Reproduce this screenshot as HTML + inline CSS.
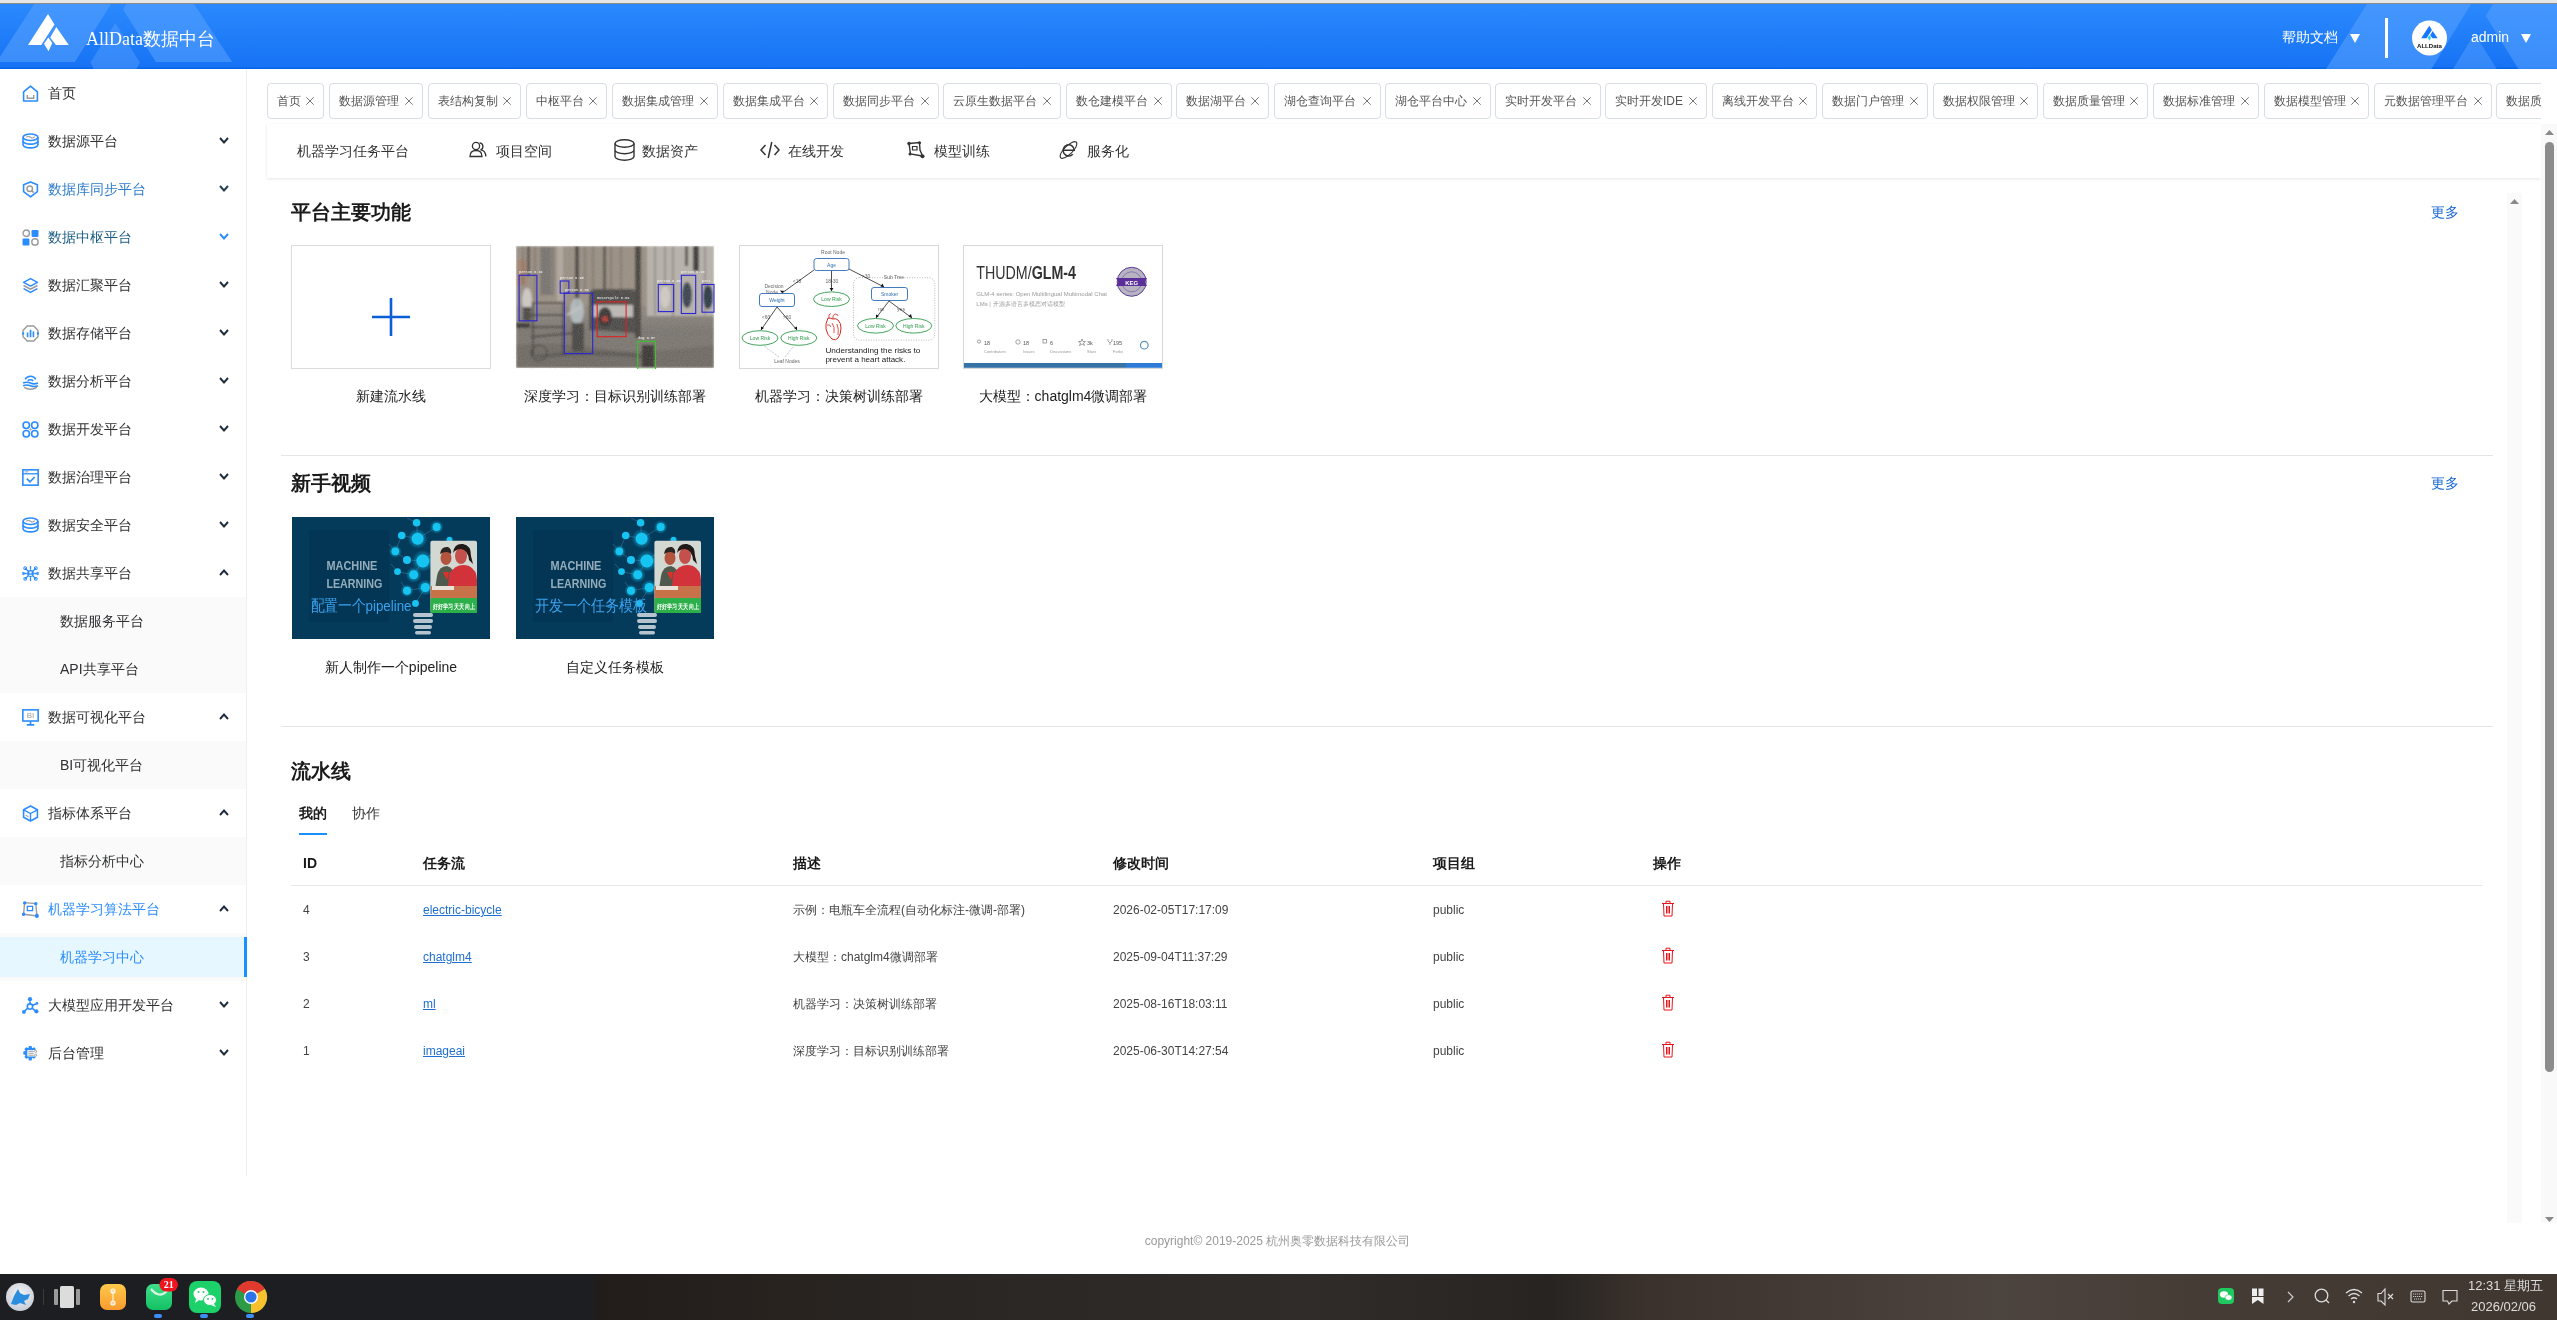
<!DOCTYPE html><html><head><meta charset="utf-8"><style>
*{margin:0;padding:0;box-sizing:border-box}
body{will-change:transform}
html,body{width:2557px;height:1320px;overflow:hidden;background:#fff;font-family:"Liberation Sans",sans-serif;color:#303133}
.a{position:absolute}
.nw{white-space:nowrap}
#topbar{position:absolute;left:0;top:0;width:2557px;height:4px;background:#e6e6e6;border-bottom:1px solid #8a8a8a}
#header{position:absolute;left:0;top:4px;width:2557px;height:65px;background:linear-gradient(180deg,#2b89fd 0%,#1773f4 96%,#0062ea 100%);overflow:hidden}
#sidebar{position:absolute;left:0;top:69px;width:247px;height:1107px;border-right:1px solid #efefef;background:#fff}
.mi{position:absolute;left:0;width:246px;height:48px;font-size:14px;line-height:48px;color:#303133;white-space:nowrap}
.mi .t{position:absolute;left:48px;top:0}
.mi svg.ic{position:absolute;left:21.5px;top:15.5px}
.mi svg.ch{position:absolute;left:219px;top:20px}
.sub{background:#fafafa}
.sub .t{left:60px}
.tag{position:absolute;top:83px;height:36px;border:1px solid #d9dde8;border-radius:4px;font-size:12px;line-height:35px;color:#555;white-space:nowrap;background:#fff}
.tag span{position:absolute;left:9px;top:0}
.tag svg{position:absolute;top:13px}
.sn{position:absolute;top:141px;font-size:14px;line-height:20px;color:#333;white-space:nowrap}
.card{position:absolute;width:200px;height:124px;overflow:hidden}
.lbl{position:absolute;font-size:14px;line-height:20px;color:#222;white-space:nowrap;text-align:center;width:260px}
.sec{position:absolute;margin-top:1px;font-size:20px;font-weight:bold;line-height:28px;color:#1a1a1a;white-space:nowrap}
.more{position:absolute;font-size:14px;line-height:20px;color:#1666d4;white-space:nowrap}
.hr{position:absolute;left:281px;width:2212px;height:1px;background:#e5e5e5}
.th{position:absolute;top:853px;font-size:14px;font-weight:bold;line-height:20px;color:#1a1a1a;white-space:nowrap}
.td{position:absolute;font-size:12px;line-height:18px;color:#444;white-space:nowrap}
.lk{color:#1f6fd0;text-decoration:underline}
</style></head><body>
<div id="topbar"></div><div id="header">
<svg class="a" style="left:0;top:0" width="2557" height="65">
<polygon points="34.2,0 111,0 74.8,58 0,58 0,52.7" fill="#5aa2ff" opacity="0.55"/>
<polygon points="115.3,19 139.8,58.6 136.4,65 93.8,65 90.4,58.6" fill="#5aa2ff" opacity="0.45"/>
<polygon points="126.1,0 194,0 232.2,58 155.9,58 123.2,5.8" fill="#5aa2ff" opacity="0.55"/>
<polygon points="2367,0 2471,0 2431.4,65 2326,65" fill="#5aa2ff" opacity="0.55"/>
<polygon points="2492.7,0 2557,0 2557,65 2518.3,65 2485.9,11.9" fill="#5aa2ff" opacity="0.55"/>
<polygon points="2453,65 2474.6,29.4 2496.7,65" fill="#5aa2ff" opacity="0.45"/>
<polygon points="48,10 54.5,20.5 41.3,41 28,41" fill="#fff"/>
<polygon points="56.3,23 68.8,41 55.9,41 50.2,33.5" fill="#fff"/>
<polygon points="48.4,33.6 52.3,38.9 48.5,47.2 44,39.7" fill="#fff"/>
</svg>
<div class="a nw" style="left:86px;top:22px;font-family:'Liberation Serif',serif;font-size:18px;color:#fff;line-height:26px">AllData数据中台</div>
<div class="a nw" style="left:2282px;top:23px;font-size:14px;color:#fff;line-height:20px">帮助文档</div>
<svg class="a" style="left:2350px;top:30px" width="10" height="9"><polygon points="0,0 10,0 5,9" fill="#fff"/></svg>
<div class="a" style="left:2385px;top:14px;width:3px;height:40px;background:#fff"></div>
<svg class="a" style="left:2411px;top:15.5px" width="36" height="36" viewBox="0 0 36 36">
<circle cx="18.5" cy="18" r="17.5" fill="#fff"/>
<g transform="translate(10.2,5.7) scale(0.404) translate(-28,-10)">
<polygon points="48,10 54.5,20.5 41.3,41 28,41" fill="#1677ff"/>
<polygon points="56.3,23 68.8,41 55.9,41 50.2,33.5" fill="#1677ff"/>
<polygon points="48.4,33.6 52.3,38.9 48.5,47.2 44,39.7" fill="#2ad0ea"/>
</g>
<text x="6" y="28.2" font-size="6.2" font-weight="bold" font-family="Liberation Sans" fill="#111" textLength="25" lengthAdjust="spacingAndGlyphs">ALLData</text>
</svg>
<div class="a nw" style="left:2471px;top:23px;font-size:14px;color:#fff;line-height:20px">admin</div>
<svg class="a" style="left:2521px;top:30px" width="10" height="9"><polygon points="0,0 10,0 5,9" fill="#fff"/></svg>
</div>
<div id="sidebar">
<div class="mi" style="top:0px;color:#303133"><svg class="ic" width="17" height="17" viewBox="0 0 16 16"><path d="M1.5 6.5 L8 1 L14.5 6.5 V15 H1.5 Z" fill="none" stroke="#2b8cff" stroke-width="1.5" stroke-linejoin="round"/><path d="M5 9.5 V12.5 H11 V9.5" fill="none" stroke="#9a9a9a" stroke-width="1.3"/></svg><span class="t">首页</span>
</div>
<div class="mi" style="top:48px;color:#303133"><svg class="ic" width="17" height="17" viewBox="0 0 16 16"><ellipse cx="8" cy="4" rx="7" ry="3" fill="none" stroke="#2b8cff" stroke-width="1.5"/><path d="M1 4 V11 A7 3 0 0 0 15 11 V4" fill="none" stroke="#2b8cff" stroke-width="1.5"/><path d="M1 7.5 A7 3 0 0 0 15 7.5" fill="none" stroke="#2b8cff" stroke-width="1.5"/><path d="M4 4 Q6 2.5 8 4 T12 3.5" fill="none" stroke="#9a9a9a" stroke-width="1"/></svg><span class="t">数据源平台</span>
<svg class="ch" width="10" height="7" viewBox="0 0 10 7"><path d="M1 1 L5 5.5 L9 1" fill="none" stroke="#1f2d3d" stroke-width="1.9"/></svg>
</div>
<div class="mi" style="top:96px;color:#2d7ccc"><svg class="ic" width="17" height="17" viewBox="0 0 16 16"><path d="M8 1 L14.5 3.5 V10 L8 15 L1.5 10 V3.5 Z" fill="none" stroke="#2b8cff" stroke-width="1.5" stroke-linejoin="round"/><circle cx="7.3" cy="7.3" r="2.6" fill="none" stroke="#9a9a9a" stroke-width="1.4"/><path d="M9.2 9.2 L11 11" stroke="#9a9a9a" stroke-width="1.5"/></svg><span class="t">数据库同步平台</span>
<svg class="ch" width="10" height="7" viewBox="0 0 10 7"><path d="M1 1 L5 5.5 L9 1" fill="none" stroke="#1f3d55" stroke-width="1.9"/></svg>
</div>
<div class="mi" style="top:144px;color:#1d5d85"><svg class="ic" width="17" height="17" viewBox="0 0 16 16"><circle cx="4" cy="4" r="3" fill="none" stroke="#9a9a9a" stroke-width="1.3"/><rect x="9" y="1" width="6.5" height="6.5" rx="1.2" fill="#2b8cff"/><rect x="0.5" y="9" width="6.5" height="6.5" rx="1.2" fill="#2b8cff"/><circle cx="12.2" cy="12.2" r="3" fill="none" stroke="#9a9a9a" stroke-width="1.3"/></svg><span class="t">数据中枢平台</span>
<svg class="ch" width="10" height="7" viewBox="0 0 10 7"><path d="M1 1 L5 5.5 L9 1" fill="none" stroke="#2b8cff" stroke-width="1.9"/></svg>
</div>
<div class="mi" style="top:192px;color:#303133"><svg class="ic" width="17" height="17" viewBox="0 0 16 16"><path d="M8 1.5 L14.5 5 L8 8.5 L1.5 5 Z" fill="none" stroke="#2b8cff" stroke-width="1.4" stroke-linejoin="round"/><path d="M1.5 8 L8 11.5 L14.5 8" fill="none" stroke="#9a9a9a" stroke-width="1.4"/><path d="M1.5 11 L8 14.5 L14.5 11" fill="none" stroke="#2b8cff" stroke-width="1.4"/></svg><span class="t">数据汇聚平台</span>
<svg class="ch" width="10" height="7" viewBox="0 0 10 7"><path d="M1 1 L5 5.5 L9 1" fill="none" stroke="#1f2d3d" stroke-width="1.9"/></svg>
</div>
<div class="mi" style="top:240px;color:#303133"><svg class="ic" width="17" height="17" viewBox="0 0 16 16"><path d="M5 1 H11 L15 5 V11 L11 15 H5 L1 11 V5 Z" fill="none" stroke="#9a9a9a" stroke-width="1.3"/><rect x="4.5" y="7" width="1.5" height="4.5" fill="#2b8cff"/><rect x="7.2" y="4.5" width="1.6" height="7" fill="#2b8cff"/><rect x="10" y="6" width="1.5" height="5.5" fill="#2b8cff"/><rect x="0" y="7" width="2" height="2" fill="#2b8cff"/><rect x="14" y="7" width="2" height="2" fill="#2b8cff"/></svg><span class="t">数据存储平台</span>
<svg class="ch" width="10" height="7" viewBox="0 0 10 7"><path d="M1 1 L5 5.5 L9 1" fill="none" stroke="#1f2d3d" stroke-width="1.9"/></svg>
</div>
<div class="mi" style="top:288px;color:#303133"><svg class="ic" width="17" height="17" viewBox="0 0 16 16"><path d="M3 6 A5.5 5 0 0 1 13 6" fill="none" stroke="#2b8cff" stroke-width="1.4"/><path d="M5.5 7.5 A3 2.5 0 0 1 10.5 7.5" fill="none" stroke="#2b8cff" stroke-width="1.4"/><path d="M1 9.5 Q4.5 8 8 9.5 T15 9.5" fill="none" stroke="#2b8cff" stroke-width="1.5"/><path d="M1 12 Q4.5 10.5 8 12 T15 12" fill="none" stroke="#2b8cff" stroke-width="1.5"/><path d="M2 13.5 Q8 17 14 13.5" fill="none" stroke="#9a9a9a" stroke-width="1.4"/></svg><span class="t">数据分析平台</span>
<svg class="ch" width="10" height="7" viewBox="0 0 10 7"><path d="M1 1 L5 5.5 L9 1" fill="none" stroke="#1f2d3d" stroke-width="1.9"/></svg>
</div>
<div class="mi" style="top:336px;color:#303133"><svg class="ic" width="17" height="17" viewBox="0 0 16 16"><circle cx="4" cy="4" r="3" fill="none" stroke="#2b8cff" stroke-width="1.5"/><circle cx="12" cy="4" r="3" fill="none" stroke="#2b8cff" stroke-width="1.5"/><circle cx="4" cy="12" r="3" fill="none" stroke="#2b8cff" stroke-width="1.5"/><circle cx="12" cy="12" r="3" fill="none" stroke="#2b8cff" stroke-width="1.5"/><path d="M7 8 H9 M8 7 V9" stroke="#9a9a9a" stroke-width="1"/></svg><span class="t">数据开发平台</span>
<svg class="ch" width="10" height="7" viewBox="0 0 10 7"><path d="M1 1 L5 5.5 L9 1" fill="none" stroke="#1f2d3d" stroke-width="1.9"/></svg>
</div>
<div class="mi" style="top:384px;color:#303133"><svg class="ic" width="17" height="17" viewBox="0 0 16 16"><rect x="0.8" y="0.8" width="14.4" height="14.4" fill="none" stroke="#2b8cff" stroke-width="1.5"/><path d="M0.8 4.5 H15.2" stroke="#2b8cff" stroke-width="1.2"/><path d="M2.5 2.7 H6" stroke="#9a9a9a" stroke-width="0.9"/><path d="M4.5 9 L7.5 12 L12 7.5" fill="none" stroke="#2b8cff" stroke-width="1.5"/></svg><span class="t">数据治理平台</span>
<svg class="ch" width="10" height="7" viewBox="0 0 10 7"><path d="M1 1 L5 5.5 L9 1" fill="none" stroke="#1f2d3d" stroke-width="1.9"/></svg>
</div>
<div class="mi" style="top:432px;color:#303133"><svg class="ic" width="17" height="17" viewBox="0 0 16 16"><ellipse cx="8" cy="4" rx="7" ry="3" fill="none" stroke="#2b8cff" stroke-width="1.5"/><path d="M1 4 V11 A7 3 0 0 0 15 11 V4" fill="none" stroke="#2b8cff" stroke-width="1.5"/><path d="M1 7.5 A7 3 0 0 0 15 7.5" fill="none" stroke="#2b8cff" stroke-width="1.5"/><path d="M4 4 Q6 2.5 8 4 T12 3.5" fill="none" stroke="#9a9a9a" stroke-width="1"/></svg><span class="t">数据安全平台</span>
<svg class="ch" width="10" height="7" viewBox="0 0 10 7"><path d="M1 1 L5 5.5 L9 1" fill="none" stroke="#1f2d3d" stroke-width="1.9"/></svg>
</div>
<div class="mi" style="top:480px;color:#303133"><svg class="ic" width="17" height="17" viewBox="0 0 16 16"><circle cx="8" cy="8" r="3.2" fill="#2b8cff"/><circle cx="8" cy="7" r="1.1" fill="#fff"/><path d="M6 10 Q8 8 10 10" fill="#fff"/><path d="M3 3 L6 6 M13 3 L10 6 M3 13 L6 10 M13 13 L10 10 M8 1 V4.5 M8 15 V11.5 M1 8 H4.5 M15 8 H11.5" stroke="#2b8cff" stroke-width="1.2"/><circle cx="3" cy="3" r="1.3" fill="none" stroke="#2b8cff" stroke-width="1"/><circle cx="13" cy="3" r="1.3" fill="none" stroke="#2b8cff" stroke-width="1"/><circle cx="3" cy="13" r="1.3" fill="none" stroke="#2b8cff" stroke-width="1"/><circle cx="13" cy="13" r="1.3" fill="none" stroke="#2b8cff" stroke-width="1"/><circle cx="1.2" cy="8" r="1.1" fill="none" stroke="#2b8cff" stroke-width="0.9"/><circle cx="14.8" cy="8" r="1.1" fill="none" stroke="#2b8cff" stroke-width="0.9"/></svg><span class="t">数据共享平台</span>
<svg class="ch" width="10" height="7" viewBox="0 0 10 7"><path d="M1 6 L5 1.5 L9 6" fill="none" stroke="#1f2d3d" stroke-width="1.9"/></svg>
</div>
<div class="mi sub" style="top:528px;color:#303133">
<span class="t">数据服务平台</span></div>
<div class="mi sub" style="top:576px;color:#303133">
<span class="t">API共享平台</span></div>
<div class="mi" style="top:624px;color:#303133"><svg class="ic" width="17" height="17" viewBox="0 0 16 16"><rect x="0.8" y="0.8" width="14.4" height="10.5" fill="none" stroke="#2b8cff" stroke-width="1.5"/><text x="8" y="8.8" font-size="7.5" text-anchor="middle" font-family="Liberation Sans" fill="#9a9a9a">BI</text><path d="M8 11.5 V14.5 M4.5 15 H11.5" stroke="#2b8cff" stroke-width="1.6"/></svg><span class="t">数据可视化平台</span>
<svg class="ch" width="10" height="7" viewBox="0 0 10 7"><path d="M1 6 L5 1.5 L9 6" fill="none" stroke="#1f2d3d" stroke-width="1.9"/></svg>
</div>
<div class="mi sub" style="top:672px;color:#303133">
<span class="t">BI可视化平台</span></div>
<div class="mi" style="top:720px;color:#303133"><svg class="ic" width="17" height="17" viewBox="0 0 16 16"><path d="M8 1 L14.5 4.5 V11.5 L8 15 L1.5 11.5 V4.5 Z" fill="none" stroke="#2b8cff" stroke-width="1.5" stroke-linejoin="round"/><path d="M1.5 4.5 L8 8 L14.5 4.5 M8 8 V15" fill="none" stroke="#2b8cff" stroke-width="1.3"/><path d="M3.5 9.5 L6 11" stroke="#9a9a9a" stroke-width="1"/></svg><span class="t">指标体系平台</span>
<svg class="ch" width="10" height="7" viewBox="0 0 10 7"><path d="M1 6 L5 1.5 L9 6" fill="none" stroke="#1f2d3d" stroke-width="1.9"/></svg>
</div>
<div class="mi sub" style="top:768px;color:#303133">
<span class="t">指标分析中心</span></div>
<div class="mi" style="top:816px;color:#2b8cff"><svg class="ic" width="17" height="17" viewBox="0 0 16 16"><path d="M2.5 1.5 L13 2.5 L14 14 L1.5 12.5 Z" fill="none" stroke="#9a9a9a" stroke-width="1.3"/><path d="M5 5 H10 V9 H5 Z" fill="none" stroke="#2b8cff" stroke-width="1.2"/><circle cx="2.5" cy="1.8" r="1.6" fill="#2b8cff"/><circle cx="13" cy="2.5" r="1.6" fill="#2b8cff"/><circle cx="14" cy="14" r="1.9" fill="#2b8cff"/><circle cx="1.5" cy="12.5" r="1.6" fill="#2b8cff"/></svg><span class="t">机器学习算法平台</span>
<svg class="ch" width="10" height="7" viewBox="0 0 10 7"><path d="M1 6 L5 1.5 L9 6" fill="none" stroke="#1f2d3d" stroke-width="1.9"/></svg>
</div>
<div class="mi sub" style="top:864px;color:#2b8cff">
<div class="a" style="left:0;top:4px;width:244px;height:40px;background:#e6f7ff"></div><div class="a" style="left:244px;top:4px;width:3px;height:40px;background:#1890ff"></div>
<span class="t">机器学习中心</span></div>
<div class="mi" style="top:912px;color:#303133"><svg class="ic" width="17" height="17" viewBox="0 0 16 16"><circle cx="7.5" cy="2" r="2" fill="#2b8cff"/><circle cx="1.8" cy="14" r="1.8" fill="#2b8cff"/><circle cx="13.5" cy="13.5" r="2" fill="#2b8cff"/><circle cx="14" cy="6" r="1.3" fill="#2b8cff"/><circle cx="7.5" cy="9" r="2.5" fill="none" stroke="#2b8cff" stroke-width="1.5"/><path d="M7.5 4 V6.5 M5.5 10.5 L2.5 13 M9.5 10.5 L12 12.5 M9.5 8 L13 6.5" stroke="#2b8cff" stroke-width="1.5"/></svg><span class="t">大模型应用开发平台</span>
<svg class="ch" width="10" height="7" viewBox="0 0 10 7"><path d="M1 1 L5 5.5 L9 1" fill="none" stroke="#1f2d3d" stroke-width="1.9"/></svg>
</div>
<div class="mi" style="top:960px;color:#303133"><svg class="ic" width="17" height="17" viewBox="0 0 16 16"><path d="M6.5 1 H9 L9.5 3 L11.5 2 L13 3.7 L12 5.6 L14 6.2 V8.8 L12 9.4 L13 11.3 L11.5 13 L9.5 12 L9 14.5 H6.5 L6 12 L4 13 L2.3 11.3 L3.3 9.4 L1.2 8.8 V6.2 L3.3 5.6 L2.3 3.7 L4 2 L6 3 Z" fill="#2b8cff"/><rect x="5" y="4.8" width="9" height="6" fill="#fff"/><path d="M6 6 H11 M6 7.8 H11 M6 9.6 H11" stroke="#9a9a9a" stroke-width="0.9"/><circle cx="12.8" cy="6" r="1" fill="none" stroke="#9a9a9a" stroke-width="0.8"/><circle cx="12.8" cy="9.6" r="1" fill="none" stroke="#9a9a9a" stroke-width="0.8"/></svg><span class="t">后台管理</span>
<svg class="ch" width="10" height="7" viewBox="0 0 10 7"><path d="M1 1 L5 5.5 L9 1" fill="none" stroke="#1f2d3d" stroke-width="1.9"/></svg>
</div>
</div>
<div class="a" style="left:0;top:0;width:2541px;height:130px;overflow:hidden">
<div class="tag" style="left:267px;width:57px"><span>首页</span><svg style="left:38px;top:13px" width="8" height="8" viewBox="0 0 8 8"><path d="M0.3 0.3 L7.7 7.7 M7.7 0.3 L0.3 7.7" stroke="#666" stroke-width="0.9"/></svg></div>
<div class="tag" style="left:329px;width:94px"><span>数据源管理</span><svg style="left:75px;top:13px" width="8" height="8" viewBox="0 0 8 8"><path d="M0.3 0.3 L7.7 7.7 M7.7 0.3 L0.3 7.7" stroke="#666" stroke-width="0.9"/></svg></div>
<div class="tag" style="left:428px;width:93px"><span>表结构复制</span><svg style="left:74px;top:13px" width="8" height="8" viewBox="0 0 8 8"><path d="M0.3 0.3 L7.7 7.7 M7.7 0.3 L0.3 7.7" stroke="#666" stroke-width="0.9"/></svg></div>
<div class="tag" style="left:526px;width:81px"><span>中枢平台</span><svg style="left:62px;top:13px" width="8" height="8" viewBox="0 0 8 8"><path d="M0.3 0.3 L7.7 7.7 M7.7 0.3 L0.3 7.7" stroke="#666" stroke-width="0.9"/></svg></div>
<div class="tag" style="left:612px;width:106px"><span>数据集成管理</span><svg style="left:87px;top:13px" width="8" height="8" viewBox="0 0 8 8"><path d="M0.3 0.3 L7.7 7.7 M7.7 0.3 L0.3 7.7" stroke="#666" stroke-width="0.9"/></svg></div>
<div class="tag" style="left:723px;width:105px"><span>数据集成平台</span><svg style="left:86px;top:13px" width="8" height="8" viewBox="0 0 8 8"><path d="M0.3 0.3 L7.7 7.7 M7.7 0.3 L0.3 7.7" stroke="#666" stroke-width="0.9"/></svg></div>
<div class="tag" style="left:833px;width:106px"><span>数据同步平台</span><svg style="left:87px;top:13px" width="8" height="8" viewBox="0 0 8 8"><path d="M0.3 0.3 L7.7 7.7 M7.7 0.3 L0.3 7.7" stroke="#666" stroke-width="0.9"/></svg></div>
<div class="tag" style="left:943px;width:118px"><span>云原生数据平台</span><svg style="left:99px;top:13px" width="8" height="8" viewBox="0 0 8 8"><path d="M0.3 0.3 L7.7 7.7 M7.7 0.3 L0.3 7.7" stroke="#666" stroke-width="0.9"/></svg></div>
<div class="tag" style="left:1066px;width:106px"><span>数仓建模平台</span><svg style="left:87px;top:13px" width="8" height="8" viewBox="0 0 8 8"><path d="M0.3 0.3 L7.7 7.7 M7.7 0.3 L0.3 7.7" stroke="#666" stroke-width="0.9"/></svg></div>
<div class="tag" style="left:1176px;width:93px"><span>数据湖平台</span><svg style="left:74px;top:13px" width="8" height="8" viewBox="0 0 8 8"><path d="M0.3 0.3 L7.7 7.7 M7.7 0.3 L0.3 7.7" stroke="#666" stroke-width="0.9"/></svg></div>
<div class="tag" style="left:1274px;width:107px"><span>湖仓查询平台</span><svg style="left:88px;top:13px" width="8" height="8" viewBox="0 0 8 8"><path d="M0.3 0.3 L7.7 7.7 M7.7 0.3 L0.3 7.7" stroke="#666" stroke-width="0.9"/></svg></div>
<div class="tag" style="left:1385px;width:106px"><span>湖仓平台中心</span><svg style="left:87px;top:13px" width="8" height="8" viewBox="0 0 8 8"><path d="M0.3 0.3 L7.7 7.7 M7.7 0.3 L0.3 7.7" stroke="#666" stroke-width="0.9"/></svg></div>
<div class="tag" style="left:1495px;width:106px"><span>实时开发平台</span><svg style="left:87px;top:13px" width="8" height="8" viewBox="0 0 8 8"><path d="M0.3 0.3 L7.7 7.7 M7.7 0.3 L0.3 7.7" stroke="#666" stroke-width="0.9"/></svg></div>
<div class="tag" style="left:1605px;width:102px"><span>实时开发IDE</span><svg style="left:83px;top:13px" width="8" height="8" viewBox="0 0 8 8"><path d="M0.3 0.3 L7.7 7.7 M7.7 0.3 L0.3 7.7" stroke="#666" stroke-width="0.9"/></svg></div>
<div class="tag" style="left:1712px;width:105px"><span>离线开发平台</span><svg style="left:86px;top:13px" width="8" height="8" viewBox="0 0 8 8"><path d="M0.3 0.3 L7.7 7.7 M7.7 0.3 L0.3 7.7" stroke="#666" stroke-width="0.9"/></svg></div>
<div class="tag" style="left:1822px;width:106px"><span>数据门户管理</span><svg style="left:87px;top:13px" width="8" height="8" viewBox="0 0 8 8"><path d="M0.3 0.3 L7.7 7.7 M7.7 0.3 L0.3 7.7" stroke="#666" stroke-width="0.9"/></svg></div>
<div class="tag" style="left:1933px;width:105px"><span>数据权限管理</span><svg style="left:86px;top:13px" width="8" height="8" viewBox="0 0 8 8"><path d="M0.3 0.3 L7.7 7.7 M7.7 0.3 L0.3 7.7" stroke="#666" stroke-width="0.9"/></svg></div>
<div class="tag" style="left:2043px;width:105px"><span>数据质量管理</span><svg style="left:86px;top:13px" width="8" height="8" viewBox="0 0 8 8"><path d="M0.3 0.3 L7.7 7.7 M7.7 0.3 L0.3 7.7" stroke="#666" stroke-width="0.9"/></svg></div>
<div class="tag" style="left:2153px;width:106px"><span>数据标准管理</span><svg style="left:87px;top:13px" width="8" height="8" viewBox="0 0 8 8"><path d="M0.3 0.3 L7.7 7.7 M7.7 0.3 L0.3 7.7" stroke="#666" stroke-width="0.9"/></svg></div>
<div class="tag" style="left:2264px;width:105px"><span>数据模型管理</span><svg style="left:86px;top:13px" width="8" height="8" viewBox="0 0 8 8"><path d="M0.3 0.3 L7.7 7.7 M7.7 0.3 L0.3 7.7" stroke="#666" stroke-width="0.9"/></svg></div>
<div class="tag" style="left:2374px;width:118px"><span>元数据管理平台</span><svg style="left:99px;top:13px" width="8" height="8" viewBox="0 0 8 8"><path d="M0.3 0.3 L7.7 7.7 M7.7 0.3 L0.3 7.7" stroke="#666" stroke-width="0.9"/></svg></div>
<div class="tag" style="left:2496px;width:105px"><span>数据质量管理</span><svg style="left:86px;top:13px" width="8" height="8" viewBox="0 0 8 8"><path d="M0.3 0.3 L7.7 7.7 M7.7 0.3 L0.3 7.7" stroke="#666" stroke-width="0.9"/></svg></div>
</div>
<div class="a" style="left:267px;top:124px;width:2274px;height:54px;background:#fff;box-shadow:0 1px 3px rgba(0,0,0,0.10)"></div>
<div class="sn" style="left:297px">机器学习任务平台</div>
<svg class="a" style="left:469px;top:141px" width="18" height="17" viewBox="0 0 18 17"><circle cx="7" cy="5" r="3.6" fill="none" stroke="#333" stroke-width="1.3"/><path d="M1 15.5 Q1 9.5 7 9.5 Q13 9.5 13 15.5 Z" fill="none" stroke="#333" stroke-width="1.3"/><path d="M10.5 1.8 A3.6 3.6 0 0 1 11.5 8.8 Q16.8 9.5 16.8 15.5" fill="none" stroke="#333" stroke-width="1.3"/></svg>
<div class="sn" style="left:496px">项目空间</div>
<svg class="a" style="left:614px;top:139px" width="21" height="22" viewBox="0 0 21 22"><ellipse cx="10.5" cy="4.5" rx="9.5" ry="3.7" fill="none" stroke="#333" stroke-width="1.4"/><path d="M1 4.5 V17.5 A9.5 3.7 0 0 0 20 17.5 V4.5 M1 11 A9.5 3.7 0 0 0 20 11" fill="none" stroke="#333" stroke-width="1.4"/></svg>
<div class="sn" style="left:642px">数据资产</div>
<svg class="a" style="left:760px;top:141px" width="20" height="18" viewBox="0 0 20 18"><path d="M5.5 4 L1 9 L5.5 14 M14.5 4 L19 9 L14.5 14 M11.8 1 L8.2 17" fill="none" stroke="#333" stroke-width="1.5"/></svg>
<div class="sn" style="left:788px">在线开发</div>
<svg class="a" style="left:907px;top:141px" width="18" height="18" viewBox="0 0 18 18"><path d="M2 2.5 L12.5 1.5 L13 9 L15.5 15 L3.5 13 Z" fill="none" stroke="#333" stroke-width="1.4"/><path d="M5.5 5.5 H10 V9 H5.5 Z" fill="none" stroke="#333" stroke-width="1.2"/><circle cx="2" cy="2.5" r="1.7" fill="#333"/><circle cx="12.5" cy="1.8" r="1.5" fill="#333"/><circle cx="15.5" cy="15.3" r="2" fill="#333"/><circle cx="3" cy="13" r="1.5" fill="#333"/></svg>
<div class="sn" style="left:934px">模型训练</div>
<svg class="a" style="left:1058px;top:139px" width="22" height="22" viewBox="0 0 22 22"><path d="M5.2 11.2 H16.3 A5.6 5.6 0 1 0 14.8 15.2" fill="none" stroke="#333" stroke-width="1.5"/><ellipse cx="10.5" cy="11" rx="11" ry="4.2" transform="rotate(-45 10.5 11)" fill="none" stroke="#333" stroke-width="1.1"/></svg>
<div class="sn" style="left:1087px">服务化</div>
<div class="sec" style="left:291px;top:197px">平台主要功能</div>
<div class="more" style="left:2431px;top:202px">更多</div>
<div class="card" style="left:291px;top:245px;border:1px solid #dcdcdc;background:#fff"><svg class="a" style="left:80px;top:52px" width="38" height="38"><path d="M19 0 V38 M0 19 H38" stroke="#0b5fd6" stroke-width="2.6"/></svg></div>
<svg class="card" style="left:515px;top:245px" width="200" height="124" viewBox="0 0 200 124">
<defs>
<linearGradient id="st1" x1="0" y1="0" x2="0" y2="1"><stop offset="0" stop-color="#9e948a"/><stop offset="0.55" stop-color="#8c857e"/><stop offset="0.7" stop-color="#7a7570"/><stop offset="1" stop-color="#6a6560"/></linearGradient>
<linearGradient id="st2" x1="0" y1="0" x2="1" y2="0"><stop offset="0" stop-color="#000" stop-opacity="0"/><stop offset="1" stop-color="#fff" stop-opacity="0.25"/></linearGradient>
</defs>
<rect x="0" y="0" width="200" height="124" fill="#fff"/>
<filter id="stb" x="0" y="0" width="100%" height="100%"><feGaussianBlur stdDeviation="0.8"/></filter><g filter="url(#stb)"><rect x="1" y="1" width="198" height="122" fill="url(#st1)"/>
<rect x="132" y="1" width="67" height="70" fill="#b7b2ab"/>
<rect x="1" y="1" width="131" height="60" fill="#9a8f84"/>
<rect x="25" y="2" width="14" height="48" fill="#7c7570"/><rect x="27" y="4" width="10" height="44" fill="#8f8a86"/>
<rect x="12" y="1" width="3" height="30" fill="#5a5550"/><rect x="60" y="1" width="4" height="60" fill="#4d4843"/>
<rect x="42" y="1" width="6" height="55" fill="#b0a89f"/><rect x="88" y="1" width="3" height="50" fill="#5c5650"/>
<rect x="120" y="1" width="6" height="92" fill="#4a4540"/><rect x="170" y="1" width="3" height="20" fill="#555"/><rect x="178" y="1" width="6" height="25" fill="#3f3c3a"/>
<rect x="2" y="15" width="10" height="25" fill="#a87d68" opacity="0.7"/>
<rect x="74" y="44" width="48" height="45" rx="6" fill="#4e4b49"/><rect x="78" y="60" width="40" height="12" fill="#bdbab6"/>
<rect x="1" y="78" width="14" height="5" fill="#3a3836"/>
<path d="M1 88 Q60 82 120 88 T199 84 V123 H1 Z" fill="#7b7671"/>
<path d="M1 100 Q50 96 90 104 Q130 110 199 100 V123 H1 Z" fill="#6f6a65"/>
<path d="M20 112 Q80 104 140 113" stroke="#4a4744" stroke-width="4" fill="none" opacity="0.5"/>
<g stroke="#3e3a36" stroke-width="1.4" fill="none"><path d="M16 58 H50 M16 70 H48 M16 82 H50 M18 58 V112 M48 58 V110 M16 92 L60 88"/><circle cx="24" cy="108" r="8" stroke-width="1"/></g>
<rect x="25" y="2" width="12" height="46" fill="#8a8580"/><g stroke="#4e4a46" stroke-width="0.8"><path d="M27 2 V48 M29.5 2 V48 M32 2 V48 M34.5 2 V48"/></g>
<g stroke="#5a544e" stroke-width="1" opacity="0.7"><path d="M8 1 V40 M20 1 V56 M70 1 V50 M78 1 V45 M96 1 V44 M106 1 V48 M140 1 V70 M150 1 V60 M158 1 V72 M190 1 V70"/></g>
<ellipse cx="12" cy="55" rx="5" ry="12" fill="#d6d3cf" opacity="0.85"/><rect x="8" y="62" width="8" height="14" fill="#4c4946"/>
<ellipse cx="62" cy="66" rx="7" ry="13" fill="#b9c4c8" opacity="0.85"/><rect x="57" y="78" width="12" height="28" fill="#4a4744"/><path d="M52 70 L66 62" stroke="#c9c6c2" stroke-width="2"/>
<ellipse cx="90" cy="72" rx="7" ry="10" fill="#3a3634"/><circle cx="90" cy="74" r="3" fill="#b83a32"/>
<rect x="127" y="100" width="12" height="22" fill="#3b3836"/>
<ellipse cx="150" cy="52" rx="5" ry="11" fill="#d0cbc4"/><ellipse cx="172" cy="50" rx="5" ry="13" fill="#3b4550"/><ellipse cx="193" cy="52" rx="5" ry="12" fill="#2c3a48"/>
<rect x="120" y="1" width="6" height="92" fill="#4a4540"/>
</g>
<filter id="stn"><feTurbulence type="fractalNoise" baseFrequency="0.9" numOctaves="2" seed="3"/><feColorMatrix type="matrix" values="0 0 0 0 0.5  0 0 0 0 0.48  0 0 0 0 0.45  0 0 0 1.2 -0.35"/></filter>
<rect x="1" y="1" width="198" height="122" filter="url(#stn)" opacity="0.3"/>
<g fill="none" stroke-width="1.1">
<rect x="4.1" y="30.3" width="17.8" height="45.5" stroke="#2a24d8"/>
<rect x="45.2" y="36" width="8.7" height="12.2" stroke="#2a24d8"/>
<rect x="49.3" y="48.2" width="28.4" height="60.4" stroke="#2a24d8"/>
<rect x="82.2" y="56.9" width="28.9" height="34.8" stroke="#e02020"/>
<rect x="122.7" y="96.3" width="17.8" height="28" stroke="#3ac42a"/>
<rect x="143.3" y="39.5" width="15.4" height="27.1" stroke="#2a24d8"/>
<rect x="166.3" y="30.3" width="14.4" height="38.2" stroke="#2a24d8"/>
<rect x="187" y="39.5" width="12" height="27.7" stroke="#2a24d8"/>
</g>
<g fill="#f4f4f4" opacity="0.8" font-family="Liberation Mono" font-size="3.6" font-weight="bold"><text x="4" y="28">person 0.92</text><text x="45" y="33.5">person 0.95</text><text x="50" y="45.5">person 0.89</text><text x="82" y="54">motorcycle 0.82</text><text x="123" y="93.5">dog 0.87</text><text x="142" y="36.5">person 0.80</text><text x="166" y="27.5">person 0.90</text><text x="187" y="36.5">pers</text></g>
</svg>
<svg class="card" style="left:739px;top:245px" width="200" height="124" viewBox="0 0 200 124">
<rect x="0.5" y="0.5" width="199" height="123" fill="#fff" stroke="#d8d8d8"/>
<g font-family="Liberation Sans" font-size="5" fill="#666" text-anchor="middle">
<text x="94" y="8.5">Root Node</text><text x="155" y="34">Sub Tree</text><text x="35" y="43">Decision</text><text x="33" y="49">Node</text><text x="48" y="118">Leaf Nodes</text>
<text x="58" y="38">&lt;18</text><text x="93" y="38">18-30</text><text x="127" y="33">&gt;30</text><text x="27" y="74">&lt;60</text><text x="48" y="74">&gt;60</text><text x="142" y="66">no</text><text x="162" y="66">yes</text>
</g>
<g fill="none" stroke="#2f6db5" stroke-width="0.9"><rect x="75" y="13.5" width="35" height="12" rx="2.5"/><rect x="20.5" y="48.5" width="35" height="13" rx="2.5"/><rect x="132.5" y="42.5" width="36" height="13" rx="2.5"/></g>
<g font-family="Liberation Sans" font-size="5" fill="#2f6db5" text-anchor="middle"><text x="92.5" y="21.5">Age</text><text x="38" y="57">Weight</text><text x="150.5" y="51">Smoker</text></g>
<g fill="none" stroke="#2e9a4a" stroke-width="0.9"><ellipse cx="92.5" cy="54.2" rx="18" ry="7.3"/><ellipse cx="21" cy="93" rx="18" ry="7.3"/><ellipse cx="59.8" cy="93" rx="18" ry="7.3"/><ellipse cx="136.5" cy="80.8" rx="18" ry="7.3"/><ellipse cx="174.8" cy="80.8" rx="18" ry="7.3"/></g>
<g font-family="Liberation Sans" font-size="5" fill="#2e9a4a" text-anchor="middle"><text x="92.5" y="56">Low Risk</text><text x="21" y="95">Low Risk</text><text x="59.8" y="95">High Risk</text><text x="136.5" y="83">Low Risk</text><text x="174.8" y="83">High Risk</text></g>
<rect x="114.5" y="32.7" width="81.3" height="62.4" rx="6" fill="none" stroke="#888" stroke-width="0.6" stroke-dasharray="1,1.5"/>
<g fill="none" stroke="#222" stroke-width="0.8"><path d="M75 25 L43 48"/><path d="M92.5 26 V46"/><path d="M110 24 L145 42"/><path d="M38 62 L22 85"/><path d="M38 62 L58 85"/><path d="M150 56 L137 73"/><path d="M150 56 L173 73"/></g>
<g fill="none" stroke="#888" stroke-width="0.6" stroke-dasharray="1,1"><path d="M40 112 L25 101"/><path d="M46 112 L54 102"/></g><g fill="#111"><path d="M43 48 L41 45.5 L45.5 46 Z"/><path d="M92.5 46 L90.5 43 L94.5 43 Z"/><path d="M145 42 L141.5 41.5 L143.5 38.5 Z"/><path d="M22 85 L22 81.5 L25 83 Z"/><path d="M58 85 L55 83 L58 81.5 Z"/><path d="M137 73 L137 69.5 L140 71 Z"/><path d="M173 73 L169.5 71.5 L172 69 Z"/></g>
<path d="M89 73 Q86 79 87 84 Q88 90 93 94 Q97 96 99 93 Q102 89 102 83 Q102 78 99 75 Q97 73 94 74 Q91 73 89 73 Z" fill="none" stroke="#d42a20" stroke-width="1"/><path d="M90 73 Q89 69 92 68.5 M94 74 Q93 70 96 69 Q99 69 99 71 M93 78 Q96 82 95 88 M98 79 Q100 84 99 90 M88 80 Q91 79 92 82" fill="none" stroke="#d42a20" stroke-width="0.8"/>
<g font-family="Liberation Sans" font-size="6.5" fill="#222"><text x="86.4" y="108" textLength="95" lengthAdjust="spacingAndGlyphs">Understanding the risks to</text><text x="86.4" y="116.5" textLength="80" lengthAdjust="spacingAndGlyphs">prevent a heart attack.</text></g>
</svg>
<svg class="card" style="left:963px;top:245px" width="200" height="124" viewBox="0 0 200 124">
<rect x="0.5" y="0.5" width="199" height="123" fill="#fff" stroke="#d8d8d8"/>
<text x="13.3" y="34.3" font-family="Liberation Sans" font-size="17.5" fill="#333" textLength="99.7" lengthAdjust="spacingAndGlyphs">THUDM/<tspan font-weight="bold">GLM-4</tspan></text>
<g font-family="Liberation Sans" font-size="6" fill="#999"><text x="13.3" y="51">GLM-4 series: Open Multilingual Multimodal Chat</text><text x="13.3" y="60.5">LMs | 开源多语言多模态对话模型</text></g>
<circle cx="168.7" cy="36.8" r="14.5" fill="#b8b3c0" stroke="#5b3a98" stroke-width="1"/>
<circle cx="168.7" cy="36.8" r="10" fill="none" stroke="#8a78b0" stroke-width="1"/>
<path d="M153 33 H184 L182 37 L184 41 H153 L155 37 Z" fill="#5b2f9a"/>
<text x="168.7" y="39.5" font-family="Liberation Sans" font-size="6" font-weight="bold" fill="#fff" text-anchor="middle">KEG</text>
<g font-family="Liberation Sans" font-size="5.5" fill="#555"><text x="21" y="100">18</text><text x="60" y="100">18</text><text x="87" y="100">6</text><text x="124" y="100">3k</text><text x="150" y="100">195</text></g>
<g font-family="Liberation Sans" font-size="4" fill="#999"><text x="21" y="108">Contributors</text><text x="60" y="108">Issues</text><text x="87" y="108">Discussions</text><text x="124" y="108">Stars</text><text x="150" y="108">Forks</text></g>
<g fill="none" stroke="#666" stroke-width="0.6"><circle cx="16" cy="96.5" r="1.6"/><circle cx="55" cy="97" r="2.2"/><rect x="80" y="94.5" width="3.5" height="3.5"/><path d="M119 94 L120 96.5 L122.5 96.5 L120.5 98 L121.5 100.5 L119 99 L116.5 100.5 L117.5 98 L115.5 96.5 L118 96.5 Z"/><path d="M145 94 V96 L147 98 V100 M149 94 V96 L147 98"/></g>
<circle cx="181.3" cy="100.2" r="3.8" fill="none" stroke="#5a8fb8" stroke-width="1.2"/>
<rect x="1" y="118" width="162" height="4.8" fill="#3572a5"/><rect x="163" y="118" width="36" height="4.8" fill="#2d7bd6"/>
</svg>
<div class="lbl" style="left:261px;top:386px">新建流水线</div>
<div class="lbl" style="left:485px;top:386px">深度学习：目标识别训练部署</div>
<div class="lbl" style="left:709px;top:386px">机器学习：决策树训练部署</div>
<div class="lbl" style="left:933px;top:386px">大模型：chatglm4微调部署</div>
<div class="hr" style="top:455px"></div>
<div class="sec" style="left:291px;top:468px">新手视频</div>
<div class="more" style="left:2431px;top:473px">更多</div>
<svg class="card" style="left:291px;top:516px;width:200px;height:124px" width="200" height="124" viewBox="0 0 200 124">
<defs><radialGradient id="gl291"><stop offset="0.4" stop-color="#17c4f2" stop-opacity="0.6"/><stop offset="1" stop-color="#17c4f2" stop-opacity="0"/></radialGradient><filter id="bl291" x="-10%" y="-10%" width="120%" height="120%"><feGaussianBlur stdDeviation="0.7"/></filter></defs>
<rect x="1" y="1" width="198" height="122" fill="#043a5a"/>
<rect x="18" y="14" width="80" height="92" fill="#03324d" opacity="0.45"/>
<g font-family="Liberation Sans" font-weight="bold" font-size="12" fill="#b9c9d4" opacity="0.8" filter="url(#bl291)"><text x="35.4" y="53.5" textLength="51" lengthAdjust="spacingAndGlyphs">MACHINE</text><text x="35.4" y="71.5" textLength="56" lengthAdjust="spacingAndGlyphs">LEARNING</text></g>
<g stroke="#6fb2cf" stroke-width="0.5" fill="none" opacity="0.6"><path d="M125.6 6.8 L126.6 22.7 L110.7 19.5 L104.3 35.4 L116 43.9 L131.9 45 L122.7 58.8 L106.5 55.6 M116 74.7 L134.3 71.5 L124.5 87.4 M145.7 11 L126.6 22.7 M158.5 23.8 L131.9 45 M116 2 L125.6 6.8 M98 28 L104.3 35.4 M100 48 L106.5 55.6 M110 66 L116 74.7"/></g>
<g fill="url(#gl291)"><circle cx="126.6" cy="22.7" r="10"/><circle cx="131.9" cy="45" r="11"/><circle cx="122.7" cy="58.8" r="8"/><circle cx="134.3" cy="71.5" r="8"/><circle cx="145.7" cy="11" r="7"/><circle cx="104.3" cy="35.4" r="6.5"/><circle cx="116" cy="74.7" r="6.5"/></g><g fill="#17c4f2" filter="url(#bl291)"><circle cx="125.6" cy="6.8" r="3.8"/><circle cx="145.7" cy="11" r="4"/><circle cx="126.6" cy="22.7" r="6"/><circle cx="110.7" cy="19.5" r="3.8"/><circle cx="104.3" cy="35.4" r="3.8"/><circle cx="131.9" cy="45" r="6.5"/><circle cx="116" cy="43.9" r="4"/><circle cx="106.5" cy="55.6" r="3.4"/><circle cx="122.7" cy="58.8" r="4.5"/><circle cx="134.3" cy="71.5" r="4.5"/><circle cx="116" cy="74.7" r="4"/><circle cx="124.5" cy="87.4" r="3.4"/><circle cx="158.5" cy="23.8" r="3"/></g>
<g fill="#d5dde3" opacity="0.85" filter="url(#bl291)"><rect x="122" y="97" width="20" height="4" rx="2"/><rect x="122" y="103" width="20" height="4" rx="2"/><rect x="123" y="109" width="18" height="4" rx="2"/><rect x="124" y="115" width="16" height="3.5" rx="1.7"/></g>
<rect x="139.4" y="24.8" width="46.6" height="72.2" rx="2" fill="#d3d9d2"/>
<path d="M146 60 Q148 50 156 50 Q163 52 165 62 L165 80 H143 Z" fill="#4f5a4c"/>
<ellipse cx="155" cy="42" rx="5.5" ry="7" fill="#b2543e"/><path d="M149 38 Q150 30 157 31 Q161 33 160 38 Q156 34 149 38 Z" fill="#2a2422"/>
<path d="M158 58 Q166 46 178 50 Q186 54 186 64 V84 H156 Z" fill="#d2333a"/>
<ellipse cx="170" cy="40" rx="6" ry="8" fill="#c4504c"/><path d="M162 37 Q163 27 172 28 Q180 29 180 40 L182 48 L178 44 Q177 34 170 33 Q165 33 162 37 Z" fill="#1f1a18"/>
<path d="M152 56 L156 64 L158 56 Z" fill="#e0302c"/>
<rect x="139.6" y="70" width="46.4" height="12.5" fill="#c8724a"/>
<rect x="141" y="70" width="22" height="4" fill="#e8e2da"/>
<rect x="139.4" y="82" width="46.6" height="15" rx="1.5" fill="#2db04a"/>
<text x="162.7" y="92.5" font-family="Liberation Sans" font-weight="bold" font-size="6.6" fill="#fff" text-anchor="middle" textLength="42" lengthAdjust="spacingAndGlyphs">好好学习 天天向上</text>
<text x="19.5" y="95" font-family="Liberation Sans" font-size="15.5" fill="#3aa2ee" textLength="101" lengthAdjust="spacingAndGlyphs">配置一个pipeline</text>
</svg>
<svg class="card" style="left:515px;top:516px;width:200px;height:124px" width="200" height="124" viewBox="0 0 200 124">
<defs><radialGradient id="gl515"><stop offset="0.4" stop-color="#17c4f2" stop-opacity="0.6"/><stop offset="1" stop-color="#17c4f2" stop-opacity="0"/></radialGradient><filter id="bl515" x="-10%" y="-10%" width="120%" height="120%"><feGaussianBlur stdDeviation="0.7"/></filter></defs>
<rect x="1" y="1" width="198" height="122" fill="#043a5a"/>
<rect x="18" y="14" width="80" height="92" fill="#03324d" opacity="0.45"/>
<g font-family="Liberation Sans" font-weight="bold" font-size="12" fill="#b9c9d4" opacity="0.8" filter="url(#bl515)"><text x="35.4" y="53.5" textLength="51" lengthAdjust="spacingAndGlyphs">MACHINE</text><text x="35.4" y="71.5" textLength="56" lengthAdjust="spacingAndGlyphs">LEARNING</text></g>
<g stroke="#6fb2cf" stroke-width="0.5" fill="none" opacity="0.6"><path d="M125.6 6.8 L126.6 22.7 L110.7 19.5 L104.3 35.4 L116 43.9 L131.9 45 L122.7 58.8 L106.5 55.6 M116 74.7 L134.3 71.5 L124.5 87.4 M145.7 11 L126.6 22.7 M158.5 23.8 L131.9 45 M116 2 L125.6 6.8 M98 28 L104.3 35.4 M100 48 L106.5 55.6 M110 66 L116 74.7"/></g>
<g fill="url(#gl515)"><circle cx="126.6" cy="22.7" r="10"/><circle cx="131.9" cy="45" r="11"/><circle cx="122.7" cy="58.8" r="8"/><circle cx="134.3" cy="71.5" r="8"/><circle cx="145.7" cy="11" r="7"/><circle cx="104.3" cy="35.4" r="6.5"/><circle cx="116" cy="74.7" r="6.5"/></g><g fill="#17c4f2" filter="url(#bl515)"><circle cx="125.6" cy="6.8" r="3.8"/><circle cx="145.7" cy="11" r="4"/><circle cx="126.6" cy="22.7" r="6"/><circle cx="110.7" cy="19.5" r="3.8"/><circle cx="104.3" cy="35.4" r="3.8"/><circle cx="131.9" cy="45" r="6.5"/><circle cx="116" cy="43.9" r="4"/><circle cx="106.5" cy="55.6" r="3.4"/><circle cx="122.7" cy="58.8" r="4.5"/><circle cx="134.3" cy="71.5" r="4.5"/><circle cx="116" cy="74.7" r="4"/><circle cx="124.5" cy="87.4" r="3.4"/><circle cx="158.5" cy="23.8" r="3"/></g>
<g fill="#d5dde3" opacity="0.85" filter="url(#bl515)"><rect x="122" y="97" width="20" height="4" rx="2"/><rect x="122" y="103" width="20" height="4" rx="2"/><rect x="123" y="109" width="18" height="4" rx="2"/><rect x="124" y="115" width="16" height="3.5" rx="1.7"/></g>
<rect x="139.4" y="24.8" width="46.6" height="72.2" rx="2" fill="#d3d9d2"/>
<path d="M146 60 Q148 50 156 50 Q163 52 165 62 L165 80 H143 Z" fill="#4f5a4c"/>
<ellipse cx="155" cy="42" rx="5.5" ry="7" fill="#b2543e"/><path d="M149 38 Q150 30 157 31 Q161 33 160 38 Q156 34 149 38 Z" fill="#2a2422"/>
<path d="M158 58 Q166 46 178 50 Q186 54 186 64 V84 H156 Z" fill="#d2333a"/>
<ellipse cx="170" cy="40" rx="6" ry="8" fill="#c4504c"/><path d="M162 37 Q163 27 172 28 Q180 29 180 40 L182 48 L178 44 Q177 34 170 33 Q165 33 162 37 Z" fill="#1f1a18"/>
<path d="M152 56 L156 64 L158 56 Z" fill="#e0302c"/>
<rect x="139.6" y="70" width="46.4" height="12.5" fill="#c8724a"/>
<rect x="141" y="70" width="22" height="4" fill="#e8e2da"/>
<rect x="139.4" y="82" width="46.6" height="15" rx="1.5" fill="#2db04a"/>
<text x="162.7" y="92.5" font-family="Liberation Sans" font-weight="bold" font-size="6.6" fill="#fff" text-anchor="middle" textLength="42" lengthAdjust="spacingAndGlyphs">好好学习 天天向上</text>
<text x="19.5" y="95" font-family="Liberation Sans" font-size="15.5" fill="#3aa2ee" textLength="113" lengthAdjust="spacingAndGlyphs">开发一个任务模板</text>
</svg>
<div class="lbl" style="left:261px;top:657px">新人制作一个pipeline</div>
<div class="lbl" style="left:485px;top:657px">自定义任务模板</div>
<div class="hr" style="top:726px"></div>
<div class="sec" style="left:291px;top:756px">流水线</div>
<div class="a nw" style="left:299px;top:803px;font-size:14px;line-height:20px;font-weight:bold;color:#222">我的</div>
<div class="a nw" style="left:352px;top:803px;font-size:14px;line-height:20px;color:#333">协作</div>
<div class="a" style="left:299px;top:833px;width:28px;height:2px;background:#1890ff"></div>
<div class="th" style="left:303px">ID</div>
<div class="th" style="left:423px">任务流</div>
<div class="th" style="left:793px">描述</div>
<div class="th" style="left:1113px">修改时间</div>
<div class="th" style="left:1433px">项目组</div>
<div class="th" style="left:1653px">操作</div>
<div class="a" style="left:291px;top:885px;width:2192px;height:1px;background:#e8e8e8"></div>
<div class="td" style="left:303px;top:901px">4</div>
<div class="td lk" style="left:423px;top:901px">electric-bicycle</div>
<div class="td" style="left:793px;top:901px">示例：电瓶车全流程(自动化标注-微调-部署)</div>
<div class="td" style="left:1113px;top:901px">2026-02-05T17:17:09</div>
<div class="td" style="left:1433px;top:901px">public</div>
<svg class="a" style="left:1661px;top:900px" width="14" height="17" viewBox="0 0 14 17"><path d="M1 3.5 H13 M5 3.5 V1.2 H9 V3.5 M2.5 3.5 L3 16 H11 L11.5 3.5 M5.5 6 V13.5 M7 6 V13.5 M8.5 6 V13.5" fill="none" stroke="#e8141a" stroke-width="1.0"/></svg>
<div class="td" style="left:303px;top:948px">3</div>
<div class="td lk" style="left:423px;top:948px">chatglm4</div>
<div class="td" style="left:793px;top:948px">大模型：chatglm4微调部署</div>
<div class="td" style="left:1113px;top:948px">2025-09-04T11:37:29</div>
<div class="td" style="left:1433px;top:948px">public</div>
<svg class="a" style="left:1661px;top:947px" width="14" height="17" viewBox="0 0 14 17"><path d="M1 3.5 H13 M5 3.5 V1.2 H9 V3.5 M2.5 3.5 L3 16 H11 L11.5 3.5 M5.5 6 V13.5 M7 6 V13.5 M8.5 6 V13.5" fill="none" stroke="#e8141a" stroke-width="1.0"/></svg>
<div class="td" style="left:303px;top:995px">2</div>
<div class="td lk" style="left:423px;top:995px">ml</div>
<div class="td" style="left:793px;top:995px">机器学习：决策树训练部署</div>
<div class="td" style="left:1113px;top:995px">2025-08-16T18:03:11</div>
<div class="td" style="left:1433px;top:995px">public</div>
<svg class="a" style="left:1661px;top:994px" width="14" height="17" viewBox="0 0 14 17"><path d="M1 3.5 H13 M5 3.5 V1.2 H9 V3.5 M2.5 3.5 L3 16 H11 L11.5 3.5 M5.5 6 V13.5 M7 6 V13.5 M8.5 6 V13.5" fill="none" stroke="#e8141a" stroke-width="1.0"/></svg>
<div class="td" style="left:303px;top:1042px">1</div>
<div class="td lk" style="left:423px;top:1042px">imageai</div>
<div class="td" style="left:793px;top:1042px">深度学习：目标识别训练部署</div>
<div class="td" style="left:1113px;top:1042px">2025-06-30T14:27:54</div>
<div class="td" style="left:1433px;top:1042px">public</div>
<svg class="a" style="left:1661px;top:1041px" width="14" height="17" viewBox="0 0 14 17"><path d="M1 3.5 H13 M5 3.5 V1.2 H9 V3.5 M2.5 3.5 L3 16 H11 L11.5 3.5 M5.5 6 V13.5 M7 6 V13.5 M8.5 6 V13.5" fill="none" stroke="#e8141a" stroke-width="1.0"/></svg>
<div class="a nw" style="left:-1px;width:2557px;text-align:center;top:1234px;font-size:12px;line-height:14px;color:#999">copyright© 2019-2025 杭州奥零数据科技有限公司</div>
<div class="a" style="left:2507px;top:193px;width:15px;height:1030px;background:#fafafa"></div>
<svg class="a" style="left:2510px;top:199px" width="9" height="5"><polygon points="0,5 9,5 4.5,0" fill="#8a8a8a"/></svg>
<div class="a" style="left:2541px;top:124px;width:16px;height:1099px;background:#f9f9f9"></div>
<svg class="a" style="left:2545px;top:130px" width="9" height="5"><polygon points="0,5 9,5 4.5,0" fill="#8a8a8a"/></svg>
<svg class="a" style="left:2545px;top:1217px" width="9" height="5"><polygon points="0,0 9,0 4.5,5" fill="#8a8a8a"/></svg>
<div class="a" style="left:2545px;top:142px;width:9px;height:930px;border-radius:5px;background:#8c8c8c"></div>
<div class="a" style="left:0;top:1274px;width:2557px;height:46px;background:linear-gradient(90deg,#1d1e22 0%,#1d1e21 23%,#221c1b 23.5%,#28231f 31%,#2a2725 39%,#2f2c29 51%,#272421 60.6%,#3b322d 64.5%,#433a35 70.4%,#4c443f 78.2%,#453c35 86%,#403730 100%)">
<svg class="a" style="left:0;top:0" width="2557" height="46">
<defs>
<radialGradient id="tb1" cx="0.5" cy="0.4" r="0.6"><stop offset="0" stop-color="#f4f5f7"/><stop offset="1" stop-color="#c7ccd6"/></radialGradient>
<linearGradient id="tb2" x1="0" y1="0" x2="0" y2="1"><stop offset="0" stop-color="#fdc94a"/><stop offset="1" stop-color="#fb9b2f"/></linearGradient>
<linearGradient id="tb3" x1="0" y1="0" x2="0" y2="1"><stop offset="0" stop-color="#3ee08a"/><stop offset="1" stop-color="#14c063"/></linearGradient>
</defs>
<circle cx="20" cy="23" r="14" fill="url(#tb1)"/>
<path d="M11 30 L14 22 L18 15 L20 19 L24 21 L30 20 L28 25 L24 27 L26 31 L20 29 L16 31 Z" fill="#2a8de0"/>
<rect x="43" y="15" width="1" height="16" fill="#3a3b3f"/>
<rect x="54" y="15" width="4" height="16" rx="1" fill="#9a9a9a"/><rect x="60" y="12" width="14" height="22" rx="1.5" fill="#dcdcdc"/><rect x="76" y="15" width="4" height="16" rx="1" fill="#9a9a9a"/>
<rect x="100" y="10" width="26" height="26" rx="7" fill="url(#tb2)"/><path d="M113 16 V30" stroke="#fff" stroke-width="1"/><circle cx="113" cy="17" r="2" fill="none" stroke="#fff" stroke-width="1.2"/><circle cx="113" cy="29" r="2" fill="none" stroke="#fff" stroke-width="1.2"/>
<rect x="146" y="10" width="26" height="26" rx="7" fill="url(#tb3)"/><path d="M151 15 Q159 25 167 17" fill="none" stroke="#d8f5e0" stroke-width="2.2"/>
<rect x="159.4" y="4" width="18.6" height="13.6" rx="6.8" fill="#f0141e"/><text x="168.7" y="14.2" font-family="Liberation Serif" font-size="10" font-weight="bold" fill="#fff" text-anchor="middle">21</text>
<rect x="154" y="40" width="8" height="4" rx="2" fill="#3d8ff5"/>
<rect x="189" y="7" width="32" height="32" rx="8" fill="#1cd06a"/>
<ellipse cx="201" cy="20" rx="7.5" ry="6.5" fill="#fff"/><path d="M196 25 L195 29 L199 26 Z" fill="#fff"/>
<ellipse cx="210" cy="26" rx="6.5" ry="5.5" fill="#fff" stroke="#1cd06a" stroke-width="1"/><path d="M214 30 L216 33 L211 31 Z" fill="#fff"/>
<circle cx="198.5" cy="18" r="1" fill="#1cd06a"/><circle cx="203.5" cy="18" r="1" fill="#1cd06a"/><circle cx="208" cy="25" r="0.9" fill="#1cd06a"/><circle cx="212.5" cy="25" r="0.9" fill="#1cd06a"/>
<rect x="200" y="40" width="8" height="4" rx="2" fill="#3d8ff5"/>
<circle cx="251" cy="23" r="16" fill="#2c9a46"/>
<path d="M251 23 L237.1 15 A16 16 0 0 1 264.9 15 Z" fill="#e0392e"/>
<path d="M251 23 L264.9 15 A16 16 0 0 1 251 39 Z" fill="#f7c02c"/>
<path d="M237.1 15 A16 16 0 0 1 251 7 H251 L251 23 Z" fill="#e0392e"/>
<circle cx="251" cy="23" r="7" fill="#fff"/><circle cx="251" cy="23" r="5.6" fill="#2b73e8"/>
<rect x="246" y="40" width="8" height="4" rx="2" fill="#3d8ff5"/>
<rect x="2218" y="14" width="16" height="16" rx="4" fill="#1fc95f"/><ellipse cx="2224" cy="20.5" rx="4" ry="3.3" fill="#fff"/><ellipse cx="2228.5" cy="23.5" rx="3.5" ry="2.8" fill="#fff" stroke="#1fc95f" stroke-width="0.6"/>
<path d="M2252 14.5 H2257 V22 H2252 Z M2258.5 14.5 H2263.5 V22 H2258.5 Z M2252 23 H2263.5 V30 L2257.8 26 L2252 30 Z" fill="#eee"/>
<path d="M2288 18 L2293 23 L2288 28" fill="none" stroke="#ccc" stroke-width="1.2"/>
<circle cx="2321.5" cy="21.5" r="6.3" fill="none" stroke="#ddd" stroke-width="1.3"/><path d="M2326 26 L2329 29" stroke="#ddd" stroke-width="1.3"/>
<path d="M2346 19 Q2354 12 2362 19 M2348.5 22 Q2354 17 2359.5 22 M2351 25 Q2354 22.5 2357 25" fill="none" stroke="#ddd" stroke-width="1.3"/><circle cx="2354" cy="28" r="1.2" fill="#ddd"/>
<path d="M2378 19.5 H2381 L2385 15 V31 L2381 27 H2378 Z" fill="none" stroke="#ddd" stroke-width="1.1"/><path d="M2388 20 L2393 25 M2393 20 L2388 25" stroke="#ddd" stroke-width="1.1"/>
<rect x="2411" y="17" width="14" height="11" rx="1.5" fill="none" stroke="#ddd" stroke-width="1.1"/><path d="M2413 20 H2423 M2413 22.5 H2423 M2414 25 H2422" stroke="#ddd" stroke-width="0.9" stroke-dasharray="1.2,0.8"/>
<path d="M2443 16.5 H2457 V27 H2452 L2449 30 L2447.5 27 H2443 Z" fill="none" stroke="#ddd" stroke-width="1.1"/>
</svg>
<div class="a nw" style="left:2468px;top:4px;font-size:13px;line-height:16px;color:#ddd">12:31 星期五</div>
<div class="a nw" style="left:2471px;top:25px;font-size:13px;line-height:16px;color:#ddd">2026/02/06</div>
</div>
</body></html>
